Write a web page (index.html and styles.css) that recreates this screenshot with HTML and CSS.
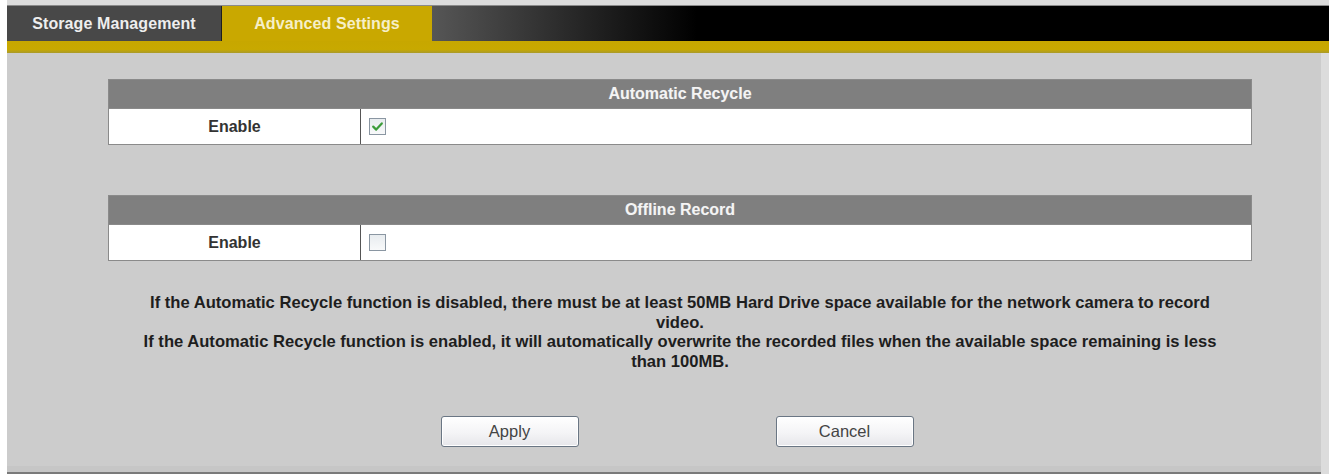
FILE: index.html
```html
<!DOCTYPE html>
<html>
<head>
<meta charset="utf-8">
<link rel="stylesheet" href="styles.css">
</head>
<body>
<div class="frame">
  <div class="tabbar">
    <div class="tab tab-dark">Storage Management</div>
    <div class="tab tab-gold">Advanced Settings</div>
  </div>
  <div class="goldline"></div>
  <div class="main">
    <div class="settings">
      <div class="sect">
        <div class="sect-head">Automatic Recycle</div>
        <div class="sect-row">
          <div class="cell-label">Enable</div>
          <div class="cell-value">
            <span class="cbox checked">
              <svg viewBox="0 0 17 17" width="17" height="17"><path d="M4.2 8.6 L7.2 11.6 L12.8 5.4" fill="none" stroke="#3c9c3a" stroke-width="2.2" stroke-linecap="round" stroke-linejoin="round"/></svg>
            </span>
          </div>
        </div>
      </div>
      <div class="sect sect-second">
        <div class="sect-head">Offline Record</div>
        <div class="sect-row">
          <div class="cell-label">Enable</div>
          <div class="cell-value">
            <span class="cbox"></span>
          </div>
        </div>
      </div>
      <div class="notes">
        <p>If the Automatic Recycle function is disabled, there must be at least 50MB Hard Drive space available for the network camera to record video.</p>
        <p>If the Automatic Recycle function is enabled, it will automatically overwrite the recorded files when the available space remaining is less than 100MB.</p>
      </div>
      <div class="actions">
        <button class="btn">Apply</button>
        <button class="btn">Cancel</button>
      </div>
    </div>
  </div>
</div>
</body>
</html>
```

FILE: styles.css
```css
html, body {
  margin: 0;
  padding: 0;
  background: #ffffff;
  font-family: "Liberation Sans", Arial, sans-serif;
}

.frame {
  margin-left: 7px;
  padding-top: 5px;
  width: 1322px;
  background: #dcdcdc;
}

.tabbar {
  display: flex;
  height: 35px;
  border-top: 1px solid #8a8a8a;
  background: linear-gradient(90deg, #565656 0, #565656 425px, #2a2a2a 560px, #000 690px, #000 100%);
}

.tab {
  display: flex;
  align-items: center;
  justify-content: center;
  font-size: 16px;
  font-weight: bold;
  letter-spacing: 0.1px;
}

.tab-dark {
  width: 214px;
  background: #484848;
  color: #eeeeee;
  border-right: 1px solid #1e1e1e;
}

.tab-gold {
  width: 210px;
  background: #c9a800;
  color: #f6efc8;
}

.goldline {
  height: 12px;
  background: linear-gradient(180deg, #c7a700 0, #c8a900 70%, #a99a2a 100%);
}

.main {
  background: #cccccc;
  margin-right: 8px;
  height: 419px;
  border-bottom: 2px solid #7a7a7a;
  box-shadow: inset 0 -6px 0 #c6c6c6;
}

.settings {
  margin-left: 101px;
  width: 1144px;
  padding-top: 26px;
  display: flex;
  flex-direction: column;
}

.sect {
  border: 1px solid #8a8a8a;
  background: #ffffff;
}

.sect-second {
  margin-top: 50px;
}

.sect-head {
  height: 28px;
  background: #7f7f7f;
  color: #f4f4f4;
  font-size: 16px;
  font-weight: bold;
  display: flex;
  align-items: center;
  justify-content: center;
  text-shadow: 0 0 1px #9a9a9a;
}

.sect-row {
  display: flex;
  height: 35px;
  border-top: 1px solid #8a8a8a;
}

.cell-label {
  width: 251px;
  border-right: 1px solid #555;
  display: flex;
  align-items: center;
  justify-content: center;
  font-size: 16px;
  font-weight: bold;
  color: #333;
}

.cell-value {
  display: flex;
  align-items: center;
  padding-left: 8px;
}

.cbox {
  width: 15px;
  height: 15px;
  border: 1px solid #8a96a2;
  background: linear-gradient(180deg, #e8ecef, #f8f9fa);
  display: block;
  position: relative;
}

.cbox svg {
  position: absolute;
  left: -1px;
  top: -1px;
}

.notes {
  margin-top: 32px;
  padding: 0 24px;
  text-align: center;
  font-size: 16.6px;
  font-weight: bold;
  color: #1e1e1e;
  line-height: 19.5px;
}

.notes p {
  margin: 0;
}

.actions {
  display: flex;
  justify-content: center;
  gap: 197px;
  margin-top: 45px;
  padding-right: 6px;
}

.btn {
  width: 138px;
  height: 31px;
  border: 1px solid #6a7684;
  border-radius: 3px;
  background: linear-gradient(180deg, #ffffff 0, #f4f4f6 55%, #e6e6ea 100%);
  box-shadow: inset 0 0 0 1px #ffffff;
  font-family: "Liberation Sans", Arial, sans-serif;
  font-size: 16.5px;
  color: #444;
  padding: 0;
}
```
